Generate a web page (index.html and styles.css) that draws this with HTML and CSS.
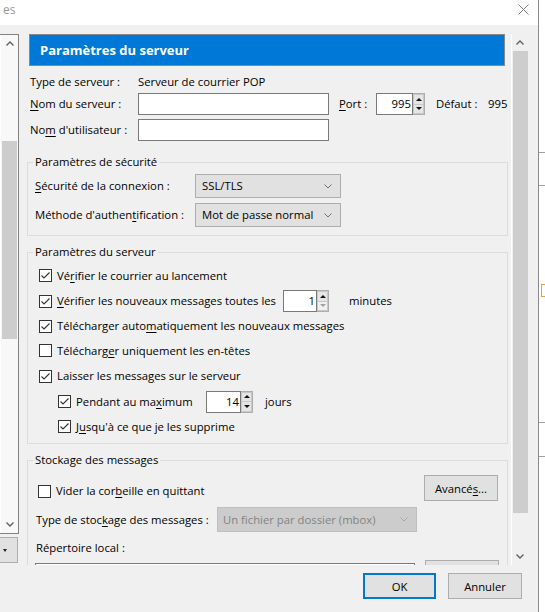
FILE: index.html
```html
<!DOCTYPE html>
<html lang="fr">
<head>
    <meta charset="UTF-8">
    <meta name="viewport" content="width=device-width, initial-scale=1.0">
    <title>Paramètres des comptes</title>
    <link rel="stylesheet" href="styles.css">
</head>
<body>
<div class="screen">
    <div class="window">
        <div class="titlebar">
            <span class="title">es</span>
            <svg class="close" width="11" height="11" viewBox="0 0 11 11">
                <path d="M0.5 0.5 L10.5 10.5 M10.5 0.5 L0.5 10.5" stroke="#808080" stroke-width="1" fill="none"/>
            </svg>
        </div>

        <div class="client">
            <div class="main">
                <div class="side">
                    <div class="tree">
                        <div class="vscroll small">
                            <div class="arrow">
                                <svg width="8" height="5" viewBox="0 0 8 5"><path d="M0.5 4.5 L4 1 L7.5 4.5" fill="none" stroke="#606060" stroke-width="1.4"/></svg>
                            </div>
                            <div class="track"><div class="thumb"></div></div>
                            <div class="arrow">
                                <svg width="8" height="5" viewBox="0 0 8 5"><path d="M0.5 0.5 L4 4 L7.5 0.5" fill="none" stroke="#606060" stroke-width="1.4"/></svg>
                            </div>
                        </div>
                    </div>
                    <div class="side-btn"><span class="tri"></span></div>
                </div>

                <div class="pane">
                    <div class="content">
                        <div class="banner">Paramètres du serveur</div>

                        <div class="form">
                            <div class="row type-row">
                                <span class="lbl">Type de serveur :</span>
                                <span>Serveur de courrier POP</span>
                            </div>
                            <div class="row field-row">
                                <span class="lbl"><u>N</u>om du serveur :</span>
                                <span class="text"></span>
                                <span class="port-lbl"><u>P</u>ort :</span>
                                <span class="spin port">
                                    <span class="spin-val">995</span>
                                    <span class="spin-btns">
                                        <span class="sb"><span class="up"></span></span>
                                        <span class="sb"><span class="down"></span></span>
                                    </span>
                                </span>
                                <span class="def-lbl">Défaut :</span>
                                <span>995</span>
                            </div>
                            <div class="row field-row">
                                <span class="lbl">No<u>m</u> d'utilisateur :</span>
                                <span class="text"></span>
                            </div>
                        </div>

                        <fieldset class="group sec">
                            <legend>Paramètres de sécurité</legend>
                            <div class="sel-row">
                                <span class="sel-lbl"><u>S</u>écurité de la connexion :</span>
                                <span class="select">SSL/TLS
                                    <svg width="8" height="5" viewBox="0 0 8 5"><path d="M0.5 0.5 L4 4 L7.5 0.5" fill="none" stroke="#707070" stroke-width="1"/></svg>
                                </span>
                            </div>
                            <div class="sel-row">
                                <span class="sel-lbl">Méthode d'authen<u>t</u>ification :</span>
                                <span class="select">Mot de passe normal
                                    <svg width="8" height="5" viewBox="0 0 8 5"><path d="M0.5 0.5 L4 4 L7.5 0.5" fill="none" stroke="#707070" stroke-width="1"/></svg>
                                </span>
                            </div>
                        </fieldset>

                        <fieldset class="group srv">
                            <legend>Paramètres du serveur</legend>
                            <div class="check h25">
                                <span class="cb on"><svg width="11" height="11" viewBox="0 0 11 11"><path d="M1.5 5.5 L4 8 L9.5 2.5" fill="none" stroke="#333" stroke-width="1.1"/></svg></span>
                                <span>Vé<u>r</u>ifier le courrier au lancement</span>
                            </div>
                            <div class="check h26">
                                <span class="cb on"><svg width="11" height="11" viewBox="0 0 11 11"><path d="M1.5 5.5 L4 8 L9.5 2.5" fill="none" stroke="#333" stroke-width="1.1"/></svg></span>
                                <span class="wide-lbl"><u>V</u>érifier les nouveaux messages toutes les</span>
                                <span class="spin minutes">
                                    <span class="spin-val">1</span>
                                    <span class="spin-btns">
                                        <span class="sb"><span class="up"></span></span>
                                        <span class="sb off"><span class="down"></span></span>
                                    </span>
                                </span>
                                <span class="unit">minutes</span>
                            </div>
                            <div class="check h24">
                                <span class="cb on"><svg width="11" height="11" viewBox="0 0 11 11"><path d="M1.5 5.5 L4 8 L9.5 2.5" fill="none" stroke="#333" stroke-width="1.1"/></svg></span>
                                <span>Télécharger auto<u>m</u>atiquement les nouveaux messages</span>
                            </div>
                            <div class="check h25">
                                <span class="cb"></span>
                                <span>Télécharg<u>e</u>r uniquement les en-têtes</span>
                            </div>
                            <div class="check h26">
                                <span class="cb on"><svg width="11" height="11" viewBox="0 0 11 11"><path d="M1.5 5.5 L4 8 L9.5 2.5" fill="none" stroke="#333" stroke-width="1.1"/></svg></span>
                                <span>Laisser les messa<u>g</u>es sur le serveur</span>
                            </div>
                            <div class="check sub h25">
                                <span class="cb on"><svg width="11" height="11" viewBox="0 0 11 11"><path d="M1.5 5.5 L4 8 L9.5 2.5" fill="none" stroke="#333" stroke-width="1.1"/></svg></span>
                                <span class="max-lbl">Pendant au ma<u>x</u>imum</span>
                                <span class="spin days">
                                    <span class="spin-val">14</span>
                                    <span class="spin-btns">
                                        <span class="sb"><span class="up"></span></span>
                                        <span class="sb"><span class="down"></span></span>
                                    </span>
                                </span>
                                <span class="unit days-unit">jours</span>
                            </div>
                            <div class="check sub h25">
                                <span class="cb on"><svg width="11" height="11" viewBox="0 0 11 11"><path d="M1.5 5.5 L4 8 L9.5 2.5" fill="none" stroke="#333" stroke-width="1.1"/></svg></span>
                                <span>J<u>u</u>squ'à ce que je les supprime</span>
                            </div>
                        </fieldset>

                        <fieldset class="group store">
                            <legend>Stockage des messages</legend>
                            <div class="store-top">
                                <div class="check trash">
                                    <span class="cb"></span>
                                    <span>Vider la cor<u>b</u>eille en quittant</span>
                                </div>
                                <button class="btn adv">Avancé<u>s</u>...</button>
                            </div>
                            <div class="sel-row store-sel">
                                <span class="store-lbl">Type de stoc<u>k</u>age des messages :</span>
                                <span class="select disabled">Un fichier par dossier (mbox)
                                    <svg width="8" height="5" viewBox="0 0 8 5"><path d="M0.5 0.5 L4 4 L7.5 0.5" fill="none" stroke="#a8a8a8" stroke-width="1"/></svg>
                                </span>
                            </div>
                            <div class="dir-lbl">Répertoire local :</div>
                            <div class="dir-row">
                                <span class="text dir"></span>
                                <button class="btn browse"></button>
                            </div>
                        </fieldset>
                    </div>

                    <div class="vscroll big">
                        <div class="arrow">
                            <svg width="8" height="5" viewBox="0 0 8 5"><path d="M0.5 4.5 L4 1 L7.5 4.5" fill="none" stroke="#606060" stroke-width="1.4"/></svg>
                        </div>
                        <div class="track"><div class="thumb"></div></div>
                        <div class="arrow">
                            <svg width="8" height="5" viewBox="0 0 8 5"><path d="M0.5 0.5 L4 4 L7.5 0.5" fill="none" stroke="#606060" stroke-width="1.4"/></svg>
                        </div>
                    </div>
                </div>
            </div>

            <div class="footer">
                <button class="btn ok">OK</button>
                <button class="btn cancel">Annuler</button>
            </div>
        </div>
    </div>

    <div class="behind">
        <div class="rule r1"></div>
        <div class="rule r2"></div>
        <div class="mark"></div>
        <div class="rule r3"></div>
        <div class="rule r4"></div>
    </div>
</div>
</body>
</html>
```

FILE: styles.css
```css
* {
    box-sizing: border-box;
}

body {
    margin: 0;
    font-family: "Open Sans", "Noto Sans", sans-serif;
    font-size: 11.3px;
    line-height: 16px;
    color: #000;
    background: #fff;
}

u {
    text-underline-offset: 2px;
}

.screen {
    display: flex;
    width: 545px;
    height: 612px;
    overflow: hidden;
}

/* window frame */
.window {
    width: 539px;
    height: 612px;
    border-right: 1px solid #8a8a8a;
    display: flex;
    flex-direction: column;
    flex: none;
}

.titlebar {
    height: 25px;
    background: #fff;
    display: flex;
    overflow: hidden;
    flex: none;
}

.title {
    font-size: 12px;
    line-height: 20px;
    color: #9a9a9a;
    margin-left: 3px;
    white-space: nowrap;
}

.close {
    margin: 4px 9px 0 auto;
}

.client {
    flex: 1;
    background: #f0f0f0;
    display: flex;
    flex-direction: column;
}

.main {
    display: flex;
    height: 540px;
    padding-top: 9px;
}

/* left tree, only its scrollbar is visible */
.side {
    width: 19px;
    display: flex;
    flex-direction: column;
    flex: none;
}

.tree {
    height: 500px;
    background: #fff;
    border: 1px solid #828282;
    border-left: none;
}

.vscroll {
    display: flex;
    flex-direction: column;
    width: 17px;
}

.vscroll.small {
    margin-left: 1px;
    height: 498px;
    background: #f8f8f8;
}

.vscroll.big {
    height: 531px;
    border-left: 1px solid #fff;
    background: #f0f0f0;
}

.arrow {
    height: 17px;
    display: flex;
    align-items: center;
    justify-content: center;
    flex: none;
}

.track {
    flex: 1;
}

.thumb {
    background: #cdcdcd;
}

.small .thumb {
    margin: 89px 1px 0 1px;
    height: 198px;
}

.big .thumb {
    margin: 0 0 0 1px;
    height: 462px;
}

.side-btn {
    margin-top: 3px;
    height: 26px;
    width: 18px;
    background: #e1e1e1;
    border: 1px solid #adadad;
    border-left: none;
    display: flex;
    align-items: center;
    padding-left: 3px;
}

.tri {
    width: 0;
    height: 0;
    border-left: 2.5px solid transparent;
    border-right: 2.5px solid transparent;
    border-top: 3px solid #222;
}

/* scrolled settings pane */
.pane {
    width: 509px;
    height: 531px;
    display: flex;
    overflow: hidden;
    flex: none;
}

.content {
    width: 492px;
    padding: 0 3px 0 8px;
    flex: none;
}

.banner {
    margin-left: 2px;
    width: 476px;
    height: 32px;
    border: 1px solid #888;
    background: #0078d7;
    color: #fff;
    font-weight: 700;
    font-size: 13px;
    line-height: 30px;
    padding-left: 10px;
}

.form {
    padding-left: 3px;
}

.row {
    display: flex;
    align-items: center;
    white-space: nowrap;
}

.type-row {
    height: 22px;
    margin-top: 5px;
}

.field-row {
    height: 22px;
}

.field-row + .field-row {
    margin-top: 4px;
}

.lbl {
    width: 108px;
    flex: none;
}

.text {
    display: block;
    width: 191px;
    height: 22px;
    background: #fff;
    border: 1px solid #7a7a7a;
    flex: none;
}

.port-lbl {
    margin-left: 10px;
    width: 37px;
}

.def-lbl {
    margin-left: 11px;
    width: 52px;
}

/* number field with spinner */
.spin {
    display: flex;
    height: 22px;
    flex: none;
}

.spin-val {
    flex: 1;
    background: #fff;
    border: 1px solid #7a7a7a;
    text-align: right;
    line-height: 20px;
    padding-right: 1px;
}

.spin-btns {
    width: 12px;
    display: flex;
    flex-direction: column;
    border: 1px solid #adadad;
    border-left: none;
    background: #fff;
}

.sb {
    flex: 1;
    display: flex;
    align-items: center;
    justify-content: center;
    background: #e5e5e5;
    border: 1px solid #c8c8c8;
}

.sb + .sb {
    border-top: none;
}

.up,
.down {
    width: 0;
    height: 0;
    border-left: 3px solid transparent;
    border-right: 3px solid transparent;
}

.up {
    border-bottom: 3px solid #111;
}

.down {
    border-top: 3px solid #111;
}

.sb.off {
    background: #f0f0f0;
}

.sb.off .down {
    border-top-color: #a0a0a0;
}

.spin.port {
    width: 49px;
}

.spin.minutes {
    width: 46px;
}

.spin.days {
    width: 47px;
}

/* group boxes */
.group {
    margin: 0;
    width: 481px;
    min-width: 0;
    border: 1px solid #dcdcdc;
}

.group legend {
    padding: 0 2px;
    margin-left: 5px;
    line-height: 16px;
}

.group.sec {
    margin-top: 13px;
    padding: 4px 0 8px;
}

.group.srv {
    margin-top: 8px;
    padding: 3px 0 4px;
}

.group.store {
    margin-top: 8px;
    padding: 7px 0 0;
}

.sel-row {
    display: flex;
    align-items: center;
    padding-left: 7px;
    white-space: nowrap;
}

.sel-row + .sel-row {
    margin-top: 5px;
}

.sel-lbl {
    width: 160px;
    flex: none;
}

.select {
    width: 146px;
    height: 24px;
    display: flex;
    align-items: center;
    justify-content: space-between;
    padding: 0 8px 0 6px;
    background: #e1e1e1;
    border: 1px solid #adadad;
    flex: none;
}

.select.disabled {
    width: 200px;
    height: 25px;
    background: #cccccc;
    border-color: #bfbfbf;
    color: #838383;
    padding-left: 5px;
}

/* check boxes */
.check {
    display: flex;
    align-items: center;
    padding-left: 11px;
    white-space: nowrap;
}

.check.sub {
    padding-left: 30px;
}

.h24 {
    height: 24px;
}

.h25 {
    height: 25px;
}

.h26 {
    height: 26px;
}

.cb {
    width: 13px;
    height: 13px;
    border: 1px solid #333;
    background: #fff;
    margin-right: 5px;
    flex: none;
    display: flex;
}

.wide-lbl {
    width: 226px;
    flex: none;
}

.max-lbl {
    width: 130px;
    flex: none;
}

.unit {
    margin-left: 20px;
}

.days-unit {
    margin-left: 12px;
}

/* storage group */
.store-top {
    display: flex;
    justify-content: space-between;
    height: 26px;
}

.check.trash {
    margin-top: 8px;
    height: 16px;
    padding-left: 10px;
}

.store-sel {
    margin-top: 6px;
    padding-left: 8px;
}

.store-lbl {
    width: 181px;
    flex: none;
}

.dir-lbl {
    margin-top: 8px;
    padding-left: 8px;
    height: 16px;
}

.dir-row {
    display: flex;
    margin-top: 4px;
    height: 26px;
}

.text.dir {
    width: 380px;
    margin: 3px 0 0 7px;
}

/* buttons */
.btn {
    height: 26px;
    background: #e1e1e1;
    border: 1px solid #adadad;
    font-family: "Open Sans", "Noto Sans", sans-serif;
    font-size: 11.3px;
    color: #000;
    padding: 0;
    flex: none;
}

.btn.adv {
    width: 74px;
    margin-right: 9px;
}

.btn.browse {
    width: 74px;
    margin-left: 10px;
}

.footer {
    display: flex;
    justify-content: flex-end;
    gap: 12px;
    padding: 8px 16px 0 0;
}

.btn.ok {
    width: 73px;
    border: 2px solid #0078d7;
}

.btn.cancel {
    width: 74px;
}

/* sliver of the page behind the dialog */
.behind {
    flex: 1;
    background: #fff;
}

.rule {
    height: 1px;
    background: #a0a0a0;
}

.r1 {
    margin-top: 152px;
}

.r2 {
    margin-top: 32px;
}

.mark {
    margin: 98px 0 0 2px;
    height: 13px;
    border: 1px solid #f0a030;
    border-right: none;
}

.r3 {
    margin-top: 125px;
}

.r4 {
    margin-top: 33px;
}
```
